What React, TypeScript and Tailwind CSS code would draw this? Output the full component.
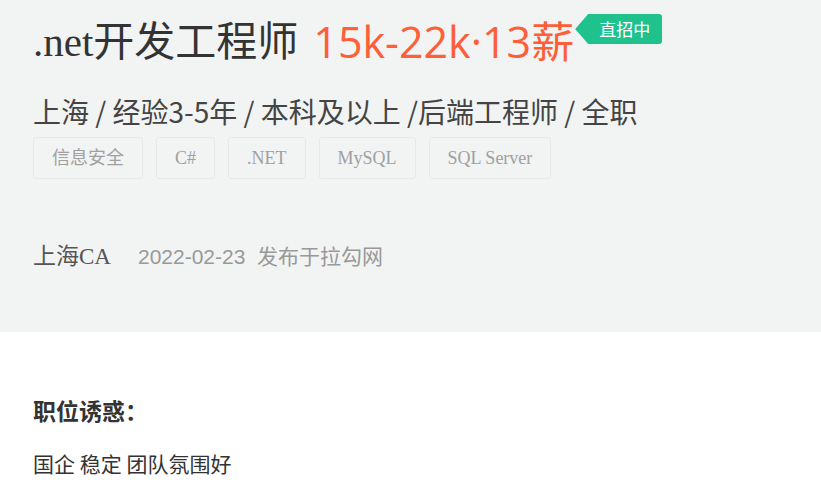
import React from "react";

const tags = ["信息安全", "C#", ".NET", "MySQL", "SQL Server"];

const serif = "font-['Liberation_Serif','Noto_Sans_CJK_SC',serif]";

const JobHeader: React.FC = () => {
  return (
    <div className="bg-[#f2f3f3] h-[332px] px-[33px] pt-[12px]">
      {/* title + salary */}
      <div className="flex items-start">
        <h1 className={`text-[41px] leading-[60px] text-[#333] ${serif}`}>
          .net开发工程师
        </h1>
        <span className="ml-[15px] text-[43px] leading-[60px] text-[#fd5f39] font-['Open_Sans','Noto_Sans_CJK_SC',sans-serif]">
          15k-22k·13薪
        </span>
        <span className="mt-[2px] ml-[1px] flex items-center justify-center h-[30px] w-[87px] pl-[12px] bg-[#1fc18c] text-white text-[17px] rounded-r-[3px] font-['Noto_Sans_CJK_SC',sans-serif] [clip-path:polygon(13px_0,100%_0,100%_100%,13px_100%,0_50%)]">
          直招中
        </span>
      </div>

      {/* requirements */}
      <p className="mt-[21px] text-[28px] leading-[36px] text-[#444] font-['Noto_Sans_CJK_SC',sans-serif]">
        上海 / 经验3-5年 / 本科及以上 /后端工程师 / 全职
      </p>

      {/* labels */}
      <ul className="mt-[8px] flex gap-[13px]">
        {tags.map((t) => (
          <li
            key={t}
            className={`h-[42px] flex items-center px-[18px] border border-[#e7e8e8] rounded-[3px] text-[18px] text-[#a0a0a0] ${serif}`}
          >
            {t}
          </li>
        ))}
      </ul>

      {/* company + date */}
      <div className="mt-[58px] flex items-center leading-[40px]">
        <span className={`text-[23px] text-[#555] ${serif}`}>上海CA</span>
        <span className="ml-[27px] text-[21px] text-[#999] font-['Liberation_Sans','Noto_Sans_CJK_SC',sans-serif]">
          2022-02-23&nbsp;&nbsp;发布于拉勾网
        </span>
      </div>
    </div>
  );
};

const App: React.FC = () => {
  return (
    <div className="w-[821px] h-[500px] bg-white overflow-hidden">
      <JobHeader />
      <div className="px-[33px] pt-[62px] font-['Noto_Sans_CJK_SC',sans-serif]">
        <h3 className="text-[23px] leading-[32px] font-bold text-[#333]">职位诱惑：</h3>
        <p className="mt-[22px] text-[21px] leading-[30px] text-[#333]">国企 稳定 团队氛围好</p>
      </div>
    </div>
  );
};

export default App;
